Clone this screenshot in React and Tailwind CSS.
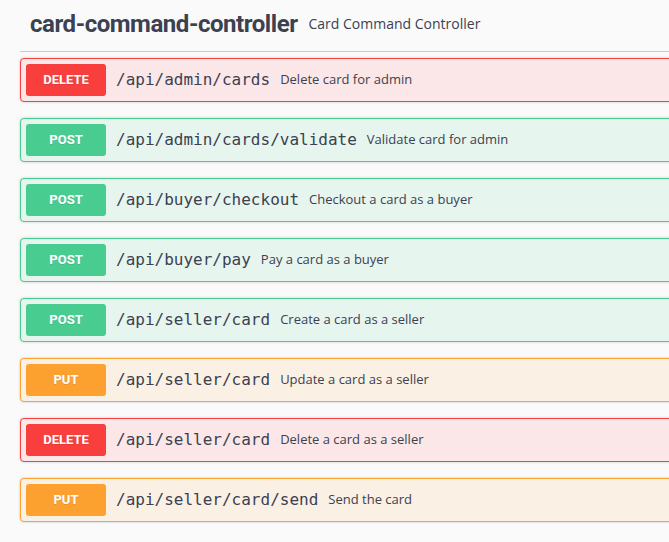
import React from "react";

const rows = [
  { m: "DELETE", path: "/api/admin/cards", desc: "Delete card for admin" },
  { m: "POST", path: "/api/admin/cards/validate", desc: "Validate card for admin" },
  { m: "POST", path: "/api/buyer/checkout", desc: "Checkout a card as a buyer" },
  { m: "POST", path: "/api/buyer/pay", desc: "Pay a card as a buyer" },
  { m: "POST", path: "/api/seller/card", desc: "Create a card as a seller" },
  { m: "PUT", path: "/api/seller/card", desc: "Update a card as a seller" },
  { m: "DELETE", path: "/api/seller/card", desc: "Delete a card as a seller" },
  { m: "PUT", path: "/api/seller/card/send", desc: "Send the card" },
];

const styles = {
  DELETE: {
    card: "border-[#f93e3e] bg-[#fbe7e8]",
    badge: "bg-[#f93e3e]",
  },
  POST: {
    card: "border-[#49cc90] bg-[#e7f5ef]",
    badge: "bg-[#49cc90]",
  },
  PUT: {
    card: "border-[#fca130] bg-[#fbf0e4]",
    badge: "bg-[#fca130]",
  },
};

function Row({ m, path, desc }) {
  const s = styles[m];
  return (
    <div
      className={`flex items-center h-[44px] border rounded-[4px] p-[5px] shadow-[0_0_3px_rgba(0,0,0,0.19)] ${s.card}`}
    >
      <div
        className={`w-[80px] h-[32px] shrink-0 flex items-center justify-center rounded-[3px] text-white font-bold text-[13px] [text-shadow:0_1px_0_rgba(0,0,0,0.1)] ${s.badge}`}
        style={{ fontFamily: "Roboto, sans-serif" }}
      >
        {m}
      </div>
      <span
        className="px-[10px] text-[16px] text-[#3b4151] whitespace-nowrap"
        style={{ fontFamily: '"DejaVu Sans Mono", monospace' }}
      >
        {path}
      </span>
      <span
        className="text-[13px] text-[#3b4151] whitespace-nowrap"
        style={{ fontFamily: '"Open Sans", sans-serif' }}
      >
        {desc}
      </span>
    </div>
  );
}

export default function App() {
  return (
    <div className="w-full min-h-screen bg-[#fafafa] overflow-hidden">
      <div className="ml-[20px] mr-[-40px]">
        <div className="flex items-center pt-[8px] pb-[11px] pl-[10px] border-b border-[#c4cbd3]">
          <span
            className="text-[24px] leading-[32px] font-bold text-[#3b4151] tracking-[-0.45px]"
            style={{ fontFamily: "Roboto, sans-serif" }}
          >
            card-command-controller
          </span>
          <span
            className="pl-[11px] text-[14px] leading-[20px] text-[#3b4151]"
            style={{ fontFamily: '"Open Sans", sans-serif' }}
          >
            Card Command Controller
          </span>
        </div>
        <div className="flex flex-col gap-[16px] pt-[6px]">
          {rows.map((r, i) => (
            <Row key={i} {...r} />
          ))}
        </div>
      </div>
    </div>
  );
}
